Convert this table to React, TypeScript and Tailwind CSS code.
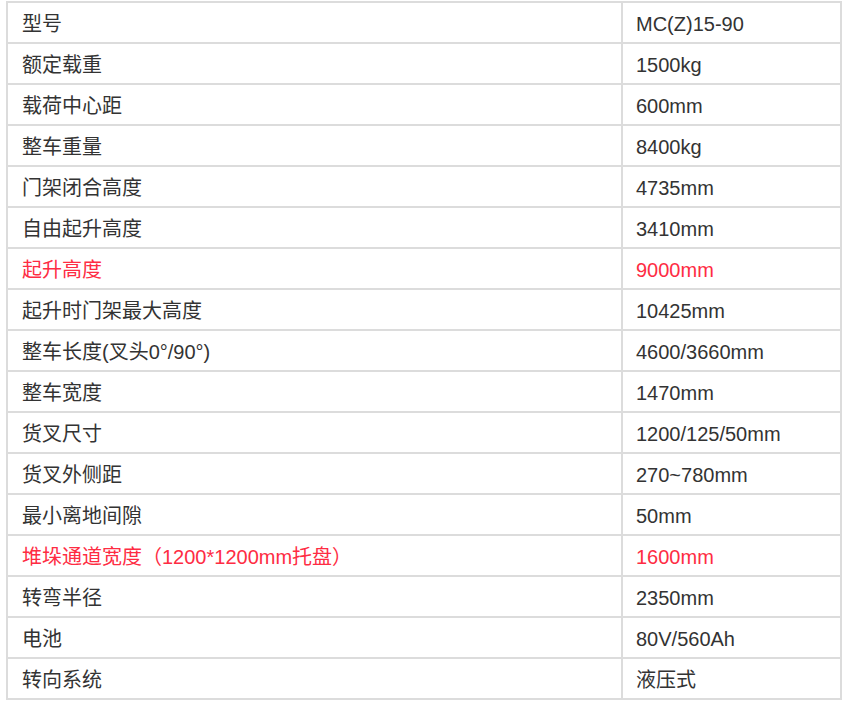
const ROWS: [string, string, boolean?][] = [
  ['型号', 'MC(Z)15-90'],
  ['额定载重', '1500kg'],
  ['载荷中心距', '600mm'],
  ['整车重量', '8400kg'],
  ['门架闭合高度', '4735mm'],
  ['自由起升高度', '3410mm'],
  ['起升高度', '9000mm', true],
  ['起升时门架最大高度', '10425mm'],
  ['整车长度(叉头0°/90°)', '4600/3660mm'],
  ['整车宽度', '1470mm'],
  ['货叉尺寸', '1200/125/50mm'],
  ['货叉外侧距', '270~780mm'],
  ['最小离地间隙', '50mm'],
  ['堆垛通道宽度（1200*1200mm托盘）', '1600mm', true],
  ['转弯半径', '2350mm'],
  ['电池', '80V/560Ah'],
  ['转向系统', '液压式'],
]

export default function App() {
  return (
    <div className="w-[857px] h-[719px] bg-white pt-px pl-[6px] font-['Liberation_Sans','Noto_Sans_CJK_SC',sans-serif] text-[20px] text-[#333]">
      <table className="w-[836px] border-collapse border-2 border-[#dcdcdc]">
        <tbody>
          {ROWS.map(([label, value, red]) => (
            <tr key={label} className={`h-[41px] ${red ? 'text-[#fe2c43]' : ''}`}>
              <td className="w-[615px] border-2 border-[#dcdcdc] pl-[14px] pt-[2px] align-middle leading-none">{label}</td>
              <td className="border-2 border-[#dcdcdc] pl-[13px] pt-[2px] align-middle leading-none">{value}</td>
            </tr>
          ))}
        </tbody>
      </table>
    </div>
  )
}
